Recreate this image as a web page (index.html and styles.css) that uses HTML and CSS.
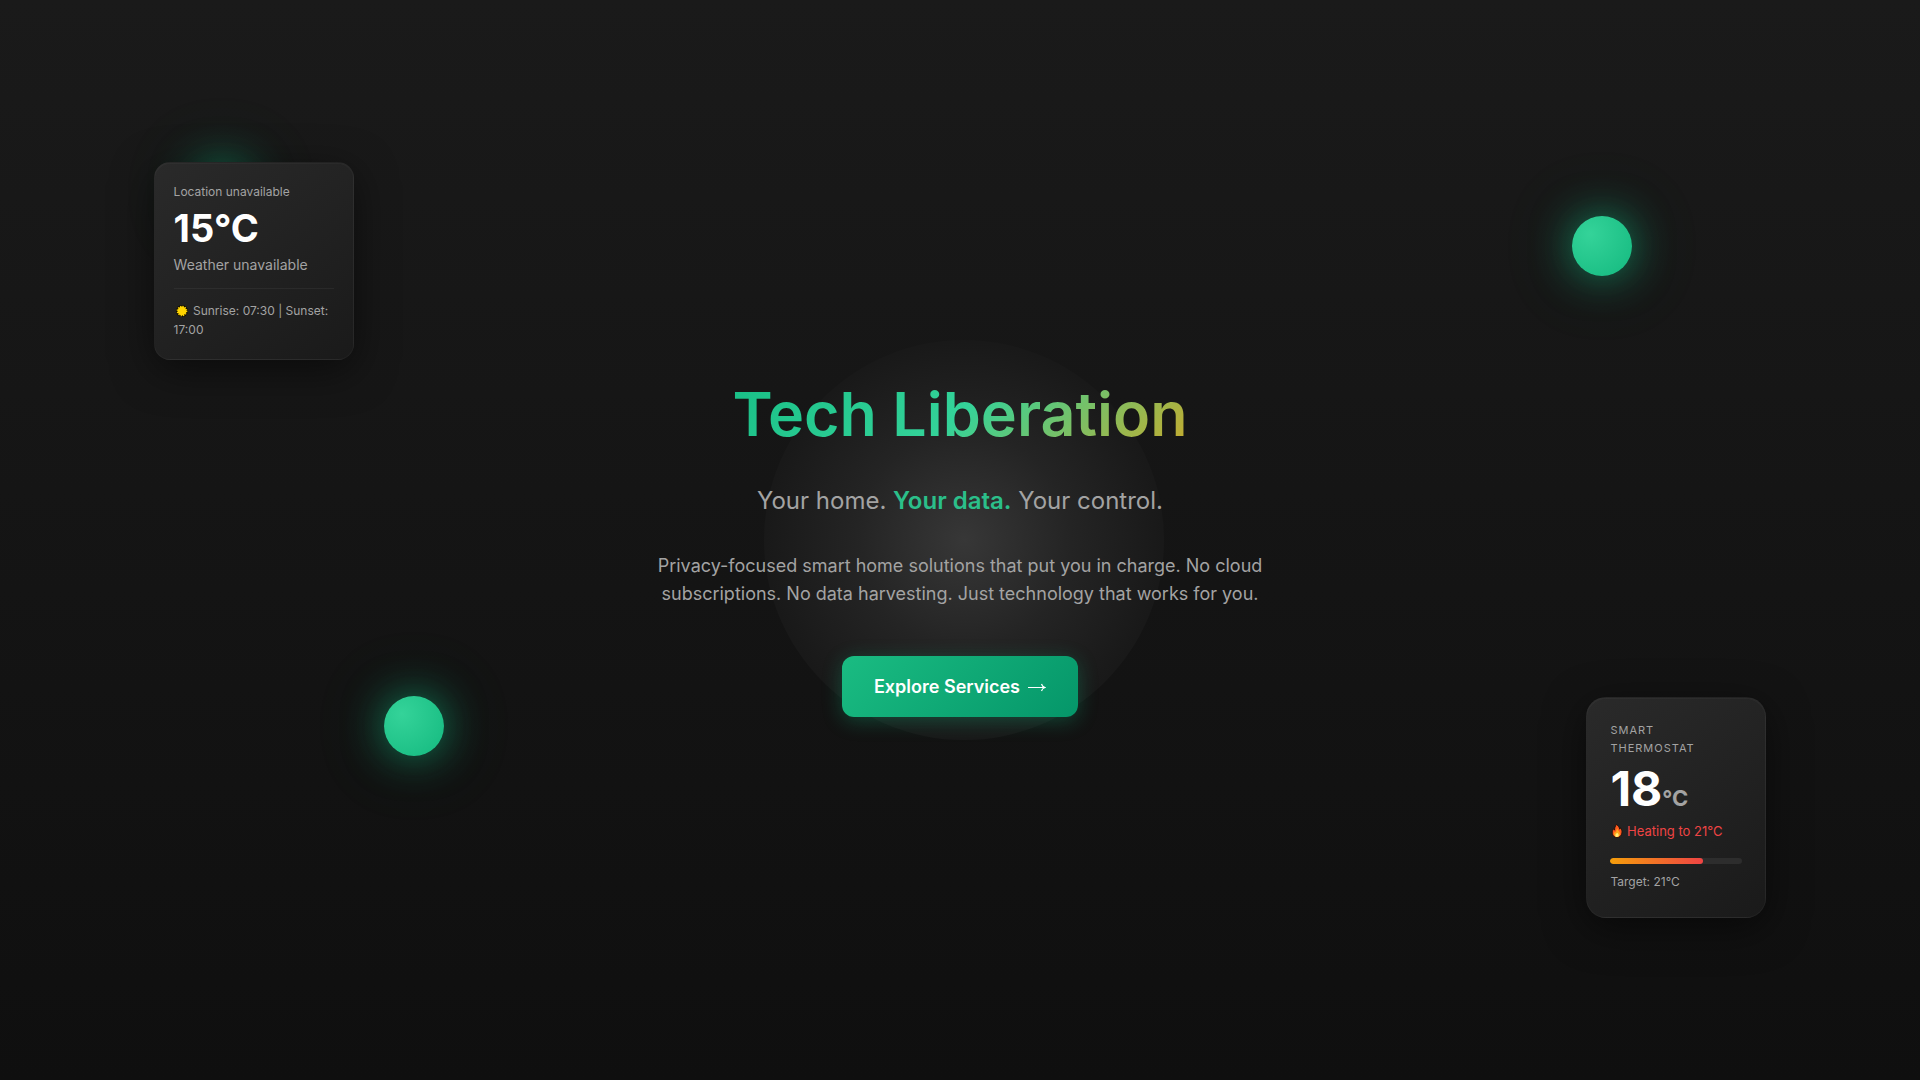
FILE: index.html
```html
<!DOCTYPE html>
<html lang="en">
<head>
    <meta charset="UTF-8">
    <meta name="viewport" content="width=device-width, initial-scale=1.0">
    <title>Tech Liberation</title>
    <link rel="stylesheet" href="styles.css">
</head>
<body>
    <main class="hero">
        <div class="ambient"></div>
        <div class="orb orb-1"></div>
        <div class="orb orb-2"></div>
        <div class="orb orb-3"></div>

        <aside class="widget weather">
            <div class="weather-location">Location unavailable</div>
            <div class="weather-temp">15°C</div>
            <div class="weather-condition">Weather unavailable</div>
            <div class="weather-sun">
                <svg class="sun-icon" viewBox="0 0 16 12" aria-hidden="true"><circle cx="8" cy="6" r="6" fill="#120f00"/><circle cx="8" cy="6" r="4.400" fill="#ffd400"/><circle cx="8" cy="6" r="4.600" fill="none" stroke="#ffd400" stroke-width="1.500" stroke-dasharray="1.200 1.200"/></svg>
                Sunrise: 07:30 | Sunset: 17:00
            </div>
        </aside>

        <aside class="widget thermostat">
            <div class="thermostat-label">Smart Thermostat</div>
            <div class="thermostat-temp">18<span class="unit">°C</span></div>
            <div class="thermostat-status">
                <svg class="fire-icon" viewBox="0 0 13 14" aria-hidden="true"><path d="M6.500 .5c2 1.500 3 3 3.200 4.700.5-.4.7-.9.8-1.500 1.200 1.800 1.700 3.500 1.400 5.300-.4 2.700-2.300 4.500-4.900 4.500S2.500 11.700 2.300 9.200c-.2-1.900.6-3.300 1.400-4.600.2.800.5 1.300.9 1.600C4.500 4 5.200 2.200 6.500 .5z" fill="#ff5a1f" stroke="#1a0b05" stroke-width=".8"/><path d="M7.300 4.500c.2 1.800 2.700 3 2.700 5.300 0 1.900-1.300 3.100-3 3.100s-3-1.200-3-2.900c0-1.200.6-2 1.200-2.600.2.500.4.800.8 1 .1-1.600.4-2.800 1.300-3.900z" fill="#ffa31a"/><path d="M7.100 8.800c.9.800 1.600 1.400 1.600 2.500 0 1-.7 1.700-1.700 1.700s-1.700-.7-1.700-1.600c0-1 .9-1.500 1.800-2.600z" fill="#fff07a"/></svg>
                Heating to 21°C
            </div>
            <div class="bar"><div class="bar-fill"></div></div>
            <div class="thermostat-target">Target: 21°C</div>
        </aside>

        <section class="hero-content">
            <h1>Tech Liberation</h1>
            <p class="tagline">Your home. <strong>Your data.</strong> Your control.</p>
            <p class="description">Privacy-focused smart home solutions that put you in charge. No cloud subscriptions. No data harvesting. Just technology that works for you.</p>
            <a class="cta" href="#services">
                Explore Services
                <svg class="arrow" viewBox="0 0 18 10" aria-hidden="true"><path d="M0 5.500h17M13.500 2c.5 1.800 1.700 3 3.500 3.500-1.800.5-3 1.700-3.500 3.500"/></svg>
            </a>
        </section>
    </main>
</body>
</html>
```
FILE: styles.css
```css
* {
    margin: 0;
    padding: 0;
    box-sizing: border-box;
}
body {
    font-family: Inter, "Liberation Sans", sans-serif;
    background-color: #0f0f0f;
    color: #a3a3a3;
    line-height: 1.6;
}
.hero {
    position: relative;
    min-height: 100vh;
    padding-top: 17px;
    display: flex;
    align-items: center;
    justify-content: center;
    overflow: hidden;
    background: linear-gradient(180deg, #1a1a1a 0%, #0f0f0f 100%);
}

/* Background lights */
.ambient {
    position: absolute;
    top: 50%;
    left: 50%;
    width: 400px;
    height: 400px;
    border-radius: 50%;
    background: radial-gradient(circle, #373737 0%, #242424 38%, #191919 70%);
    transform: translate(-49%, -50%);
}
.orb {
    position: absolute;
    width: 60px;
    height: 60px;
    border-radius: 50%;
    background: radial-gradient(circle at 30% 30%, #34d399, #14b97f);
    box-shadow: 0 0 40px rgba(16, 185, 129, 0.6), 0 0 80px rgba(16, 185, 129, 0.2);
}
.orb-1 {
    top: 15%;
    left: 10%;
}
.orb-2 {
    top: 20%;
    right: 15%;
}
.orb-3 {
    bottom: 30%;
    left: 20%;
}

/* Floating widgets */
.widget {
    position: absolute;
    background: linear-gradient(145deg, #2a2a2a, #1a1a1a);
    border: 1px solid rgba(255, 255, 255, 0.03);
    box-shadow: 0 10px 40px rgba(0, 0, 0, 0.5), inset 0 1px 0 rgba(255, 255, 255, 0.03);
}
.weather {
    top: 15%;
    left: 8%;
    width: 200px;
    padding: 19px 19px 20px;
    border-radius: 16px;
}
.weather-location {
    font-size: 12px;
    line-height: 20px;
    margin-bottom: 4px;
}
.weather-temp {
    font-size: 38px;
    font-weight: 700;
    line-height: 44px;
    color: #fff;
}
.weather-condition {
    font-size: 14px;
    line-height: 22px;
    margin-top: 4px;
}
.weather-sun {
    font-size: 12px;
    line-height: 19px;
    margin-top: 12px;
    padding-top: 12px;
    border-top: 1px solid rgba(255, 255, 255, 0.05);
}
.sun-icon {
    width: 16px;
    height: 12px;
    vertical-align: -2px;
}
.thermostat {
    right: 8%;
    bottom: 15%;
    width: 180px;
    padding: 23px 23px 25px;
    border-radius: 20px;
}
.thermostat-label {
    font-size: 11px;
    line-height: 18px;
    letter-spacing: 1px;
    text-transform: uppercase;
    margin-bottom: 6px;
}
.thermostat-temp {
    font-size: 48px;
    font-weight: 700;
    line-height: 52px;
    color: #fff;
}
.unit {
    font-size: 22px;
    line-height: 24px;
    color: #a3a3a3;
}
.thermostat-status {
    font-size: 13px;
    line-height: 20px;
    margin-top: 6px;
    color: #ef4444;
}
.fire-icon {
    width: 13px;
    height: 14px;
    vertical-align: -2px;
}
.bar {
    height: 6px;
    margin: 17px 0 8px;
    border-radius: 3px;
    background: #2d2d2d;
    overflow: hidden;
}
.bar-fill {
    width: 70%;
    height: 100%;
    border-radius: 3px;
    background: linear-gradient(90deg, #f59e0b, #ef4444);
}
.thermostat-target {
    font-size: 12px;
    line-height: 20px;
}

/* Hero text */
.hero-content {
    position: relative;
    max-width: 800px;
    padding: 0 32px;
    text-align: center;
}
h1 {
    font-size: 61px;
    font-weight: 600;
    line-height: 68px;
    margin-bottom: 34px;
    background: linear-gradient(135deg, #10b981 0%, #34d399 50%, #f59e0b 100%);
    -webkit-background-clip: text;
    background-clip: text;
    color: transparent;
}
.tagline {
    font-size: 24px;
    line-height: 38px;
    margin-bottom: 32px;
}
.tagline strong {
    font-weight: 600;
    color: #2bbf8a;
}
.description {
    max-width: 620px;
    margin: 0 auto 48px;
    font-size: 18px;
    line-height: 28px;
}
.cta {
    display: inline-flex;
    align-items: center;
    gap: 8px;
    padding: 16px 32px;
    border-radius: 12px;
    background: linear-gradient(135deg, #1abc82, #059669);
    box-shadow: 0 4px 20px rgba(16, 185, 129, 0.3);
    color: #fff;
    font-size: 18px;
    font-weight: 600;
    line-height: 29px;
    text-decoration: none;
}
.arrow {
    width: 18px;
    height: 10px;
    fill: none;
    stroke: #fff;
    stroke-width: 1.2;
}
```
